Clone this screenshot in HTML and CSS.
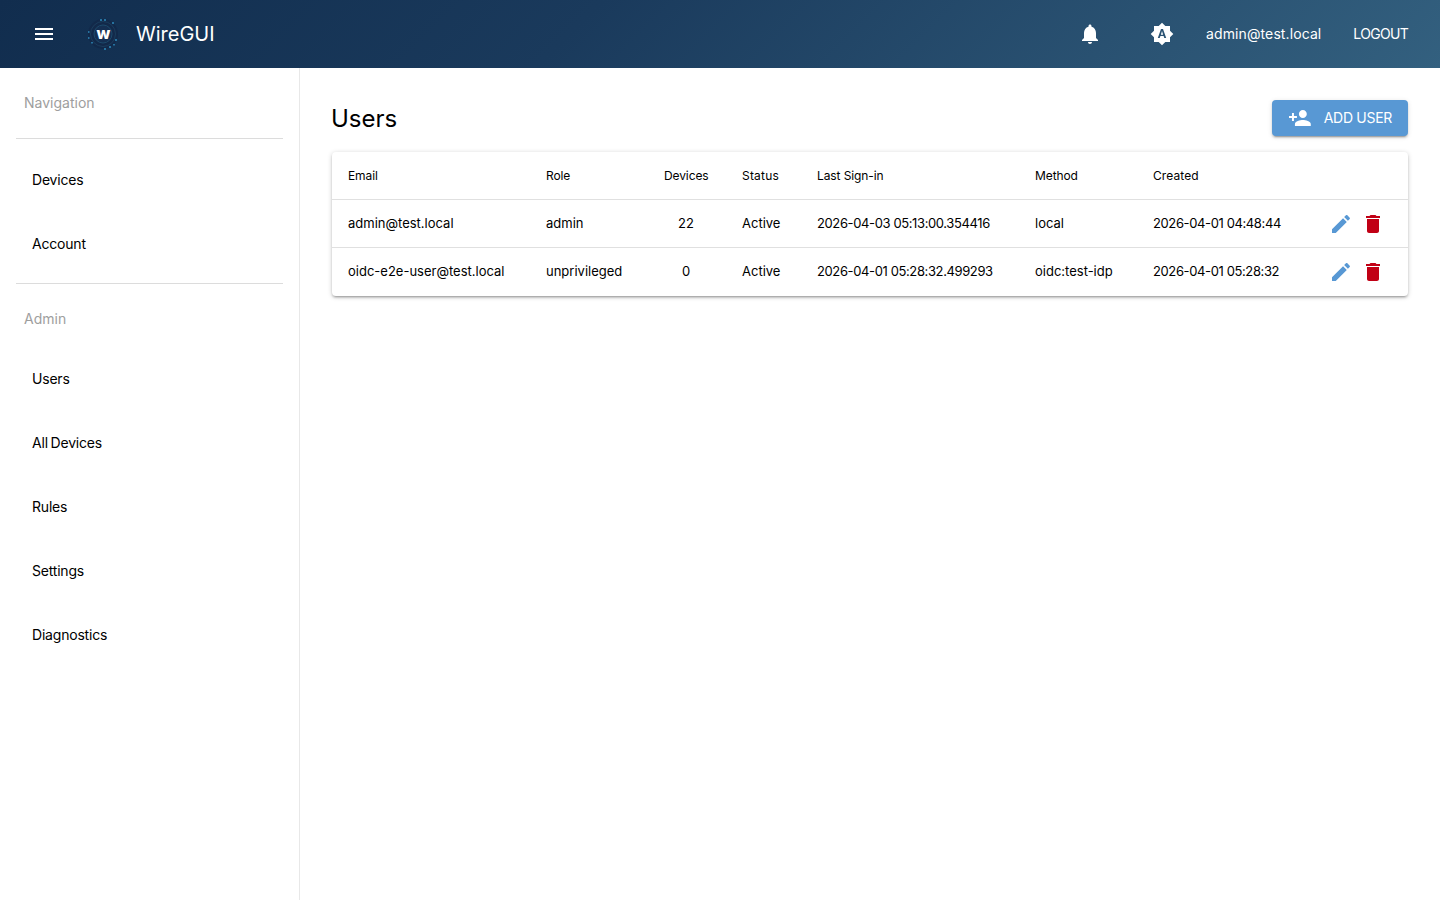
FILE: index.html
```html
<!DOCTYPE html>
<html lang="en">
<head>
    <meta charset="UTF-8">
    <meta name="viewport" content="width=device-width, initial-scale=1.0">
    <title>WireGUI - Users</title>
    <link rel="stylesheet" href="styles.css">
</head>
<body>
    <header class="topbar">
        <button class="icon-btn menu-btn" aria-label="Menu">
            <svg viewBox="0 0 24 24" width="24" height="24"><path d="M3 18h18v-2H3v2zm0-5h18v-2H3v2zm0-7v2h18V6H3z"/></svg>
        </button>
        <svg class="logo" viewBox="0 0 32 32" width="32" height="32">
            <circle cx="16" cy="16" r="15" fill="#12294a"/>
            <circle cx="16" cy="16" r="12.5" fill="none" stroke="#1b3d5c" stroke-width="1"/>
            <circle cx="16" cy="16" r="9" fill="#152f52" stroke="#1d4a6b" stroke-width="1"/>
            <g fill="#26729f">
                <rect x="13" y="1" width="2" height="2"/>
                <rect x="17" y="1" width="2" height="2"/>
                <rect x="25" y="4" width="2" height="2"/>
                <rect x="1" y="13" width="1.500" height="2"/>
                <rect x="1" y="19" width="1.500" height="2"/>
                <rect x="4" y="24" width="2" height="1.500"/>
                <rect x="28" y="21" width="2" height="2"/>
                <rect x="26" y="26" width="2" height="1.500"/>
                <rect x="22" y="28" width="2" height="2"/>
                <rect x="17" y="30" width="2" height="2"/>
            </g>
            <text x="16.500" y="21" text-anchor="middle" class="logo-letter">w</text>
        </svg>
        <span class="brand">WireGUI</span>
        <div class="spacer"></div>
        <button class="icon-btn bell-btn" aria-label="Notifications">
            <svg viewBox="0 0 24 24" width="24" height="24"><path d="M12 22c1.100 0 2-.9 2-2h-4c0 1.100.89 2 2 2zm6-6v-5c0-3.070-1.640-5.640-4.500-6.320V4c0-.83-.67-1.500-1.500-1.500s-1.500.67-1.500 1.500v.68C7.630 5.360 6 7.920 6 11v5l-2 2v1h16v-1l-2-2z"/></svg>
        </button>
        <button class="icon-btn theme-btn" aria-label="Theme">
            <svg viewBox="0 0 24 24" width="24" height="24"><path d="M10.850 12.650h2.300L12 9l-1.150 3.650zM20 8.690V4h-4.690L12 .69 8.690 4H4v4.690L.69 12 4 15.310V20h4.690L12 23.310 15.310 20H20v-4.690L23.310 12 20 8.690zM14.300 16l-.7-2h-3.200l-.7 2H7.800L11 7h2l3.200 9h-1.900z"/></svg>
        </button>
        <span class="user-email">admin@test.local</span>
        <a class="logout">LOGOUT</a>
    </header>

    <div class="layout">
        <aside class="sidebar">
            <div class="nav-label nav-label-first">Navigation</div>
            <hr class="nav-sep">
            <nav class="nav-group nav-group-first">
                <a class="nav-item">Devices</a>
                <a class="nav-item">Account</a>
            </nav>
            <hr class="nav-sep">
            <div class="nav-label">Admin</div>
            <nav class="nav-group">
                <a class="nav-item">Users</a>
                <a class="nav-item">All Devices</a>
                <a class="nav-item">Rules</a>
                <a class="nav-item">Settings</a>
                <a class="nav-item">Diagnostics</a>
            </nav>
        </aside>

        <main class="content">
            <div class="page-head">
                <h1>Users</h1>
                <button class="add-btn">
                    <svg viewBox="0 0 24 24" width="24" height="24"><path d="M15 12c2.210 0 4-1.790 4-4s-1.790-4-4-4-4 1.790-4 4 1.790 4 4 4zm-9-2V7H4v3H1v2h3v3h2v-3h3v-2H6zm9 4c-2.670 0-8 1.340-8 4v2h16v-2c0-2.660-5.330-4-8-4z"/></svg>
                    <span>ADD USER</span>
                </button>
            </div>

            <div class="card">
                <table class="users">
                    <thead>
                        <tr>
                            <th class="col-email">Email</th>
                            <th class="col-role">Role</th>
                            <th class="col-devices">Devices</th>
                            <th class="col-status">Status</th>
                            <th class="col-signin">Last Sign-in</th>
                            <th class="col-method">Method</th>
                            <th class="col-created">Created</th>
                            <th class="col-actions"></th>
                        </tr>
                    </thead>
                    <tbody>
                        <tr>
                            <td>admin@test.local</td>
                            <td>admin</td>
                            <td class="col-devices">22</td>
                            <td>Active</td>
                            <td class="date">2026-04-03 05:13:00.354416</td>
                            <td>local</td>
                            <td class="date">2026-04-01 04:48:44</td>
                            <td class="col-actions">
                                <div class="actions">
                                    <svg class="edit" viewBox="0 0 24 24" width="24" height="24"><path d="M3 17.250V21h3.750L17.810 9.940l-3.750-3.750L3 17.250zM20.710 7.040c.39-.39.39-1.020 0-1.410l-2.340-2.340c-.39-.39-1.020-.39-1.410 0l-1.830 1.830 3.750 3.750 1.830-1.830z"/></svg>
                                    <svg class="trash" viewBox="0 0 24 24" width="24" height="24"><path d="M6 19c0 1.100.9 2 2 2h8c1.100 0 2-.9 2-2V7H6v12zM19 4h-3.500l-1-1h-5l-1 1H5v2h14V4z"/></svg>
                                </div>
                            </td>
                        </tr>
                        <tr>
                            <td>oidc-e2e-user@test.local</td>
                            <td>unprivileged</td>
                            <td class="col-devices">0</td>
                            <td>Active</td>
                            <td class="date">2026-04-01 05:28:32.499293</td>
                            <td>oidc:test-idp</td>
                            <td class="date">2026-04-01 05:28:32</td>
                            <td class="col-actions">
                                <div class="actions">
                                    <svg class="edit" viewBox="0 0 24 24" width="24" height="24"><path d="M3 17.250V21h3.750L17.810 9.940l-3.750-3.750L3 17.250zM20.710 7.040c.39-.39.39-1.020 0-1.410l-2.340-2.340c-.39-.39-1.020-.39-1.410 0l-1.830 1.830 3.750 3.750 1.830-1.830z"/></svg>
                                    <svg class="trash" viewBox="0 0 24 24" width="24" height="24"><path d="M6 19c0 1.100.9 2 2 2h8c1.100 0 2-.9 2-2V7H6v12zM19 4h-3.500l-1-1h-5l-1 1H5v2h14V4z"/></svg>
                                </div>
                            </td>
                        </tr>
                    </tbody>
                </table>
            </div>
        </main>
    </div>
</body>
</html>
```

FILE: styles.css
```css
* {
    box-sizing: border-box;
}

html, body {
    height: 100%;
}

body {
    margin: 0;
    font-family: 'Inter', 'Roboto', sans-serif;
    color: #000;
    background: #fff;
    overflow: hidden;
}

/* top bar */
.topbar {
    height: 68px;
    display: flex;
    align-items: center;
    padding: 0 32px;
    color: #fff;
    background: linear-gradient(135deg, #112d4e 0%, #1a3a5c 40%, #33607f 100%);
}

.icon-btn {
    width: 24px;
    height: 24px;
    padding: 0;
    border: none;
    background: none;
    fill: #fff;
    display: block;
}

.icon-btn svg {
    display: block;
}

.logo {
    margin-left: 31px;
}

.logo-letter {
    font-family: 'Inter', sans-serif;
    font-size: 16px;
    font-weight: 800;
    fill: #fff;
}

.brand {
    margin-left: 17px;
    font-size: 20px;
}

.spacer {
    flex: 1;
}

.theme-btn {
    margin-left: 48px;
}

.user-email {
    margin-left: 32px;
    font-size: 14px;
    letter-spacing: 0.1px;
    line-height: 20px;
    margin-bottom: 1px;
}

.logout {
    margin-left: 32px;
    font-size: 14px;
    letter-spacing: -0.7px;
    line-height: 20px;
    margin-bottom: 1px;
}

/* sidebar */
.layout {
    display: flex;
    height: calc(100% - 68px);
}

.sidebar {
    width: 300px;
    flex-shrink: 0;
    padding: 0 16px;
    border-right: 1px solid #e8e8e8;
}

.nav-label {
    padding: 24px 0 17px 8px;
    line-height: 22px;
    font-size: 14px;
    color: #9e9e9e;
}

.nav-label-first {
    padding-bottom: 24px;
}

.nav-sep {
    margin: 0;
    border: none;
    border-top: 1px solid #dcdcdc;
}

.nav-group-first {
    margin: 9px 0 7px;
}

.nav-item {
    display: block;
    height: 64px;
    line-height: 64px;
    padding-left: 16px;
    font-size: 14px;
    letter-spacing: -0.2px;
    word-spacing: -1px;
}

/* main */
.content {
    flex: 1;
    padding: 32px;
}

.page-head {
    display: flex;
    align-items: center;
    justify-content: space-between;
    height: 36px;
    margin-bottom: 16px;
}

h1 {
    margin: 0 0 0 -1px;
    font-size: 24px;
    font-weight: 400;
}

.add-btn {
    height: 36px;
    width: 136px;
    display: flex;
    align-items: center;
    gap: 12px;
    padding: 0 16px 1px;
    border: none;
    border-radius: 4px;
    background: #5898d4;
    color: #fff;
    fill: #fff;
    font-family: inherit;
    font-size: 14px;
    letter-spacing: -0.3px;
    white-space: nowrap;
    box-shadow: 0 3px 1px -2px rgba(0, 0, 0, 0.2), 0 2px 2px rgba(0, 0, 0, 0.14), 0 1px 5px rgba(0, 0, 0, 0.12);
}

.add-btn svg {
    margin-top: 1px;
}

.card {
    border-radius: 4px;
    background: #fff;
    box-shadow: 0 1px 5px rgba(0, 0, 0, 0.2), 0 2px 2px rgba(0, 0, 0, 0.14), 0 3px 1px -2px rgba(0, 0, 0, 0.12);
}

.users {
    width: 100%;
    border-collapse: separate;
    border-spacing: 0;
    table-layout: fixed;
    font-size: 13px;
}

.users th, .users td {
    height: 48px;
    padding: 0 16px;
    text-align: left;
    font-weight: 400;
    white-space: nowrap;
    border-bottom: 1px solid #e0e0e0;
}

.users td {
    padding-bottom: 1px;
}

.users th {
    font-size: 12px;
    letter-spacing: -0.1px;
}

.users tbody tr:last-child td {
    border-bottom: none;
    padding-bottom: 2px;
}

.users .col-devices {
    text-align: center;
    padding-right: 18px;
}

.users .col-status {
    letter-spacing: 0.2px;
}

.users .col-created {
    letter-spacing: 0.1px;
}

.users .date {
    letter-spacing: -0.38px;
}

.users tbody tr td.col-actions {
    padding-bottom: 0;
}

.col-email { width: 198px; }
.col-role { width: 118px; }
.col-devices { width: 78px; }
.col-status { width: 75px; }
.col-signin { width: 218px; }
.col-method { width: 118px; }
.col-created { width: 176px; }

.actions {
    display: flex;
    gap: 8px;
}

.edit {
    fill: #5898d4;
}

.trash {
    fill: #c10015;
}
```
